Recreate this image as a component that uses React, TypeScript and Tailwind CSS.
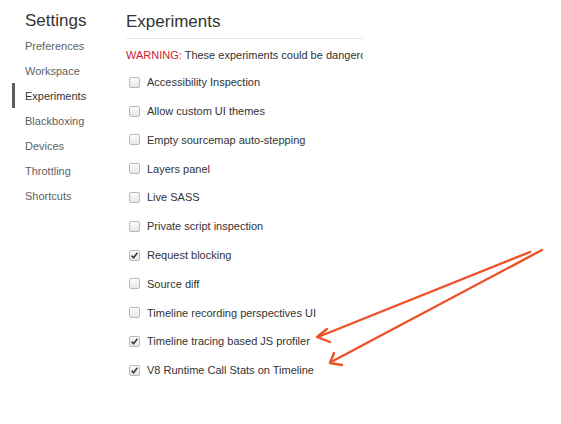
const NAV = ["Preferences", "Workspace", "Experiments", "Blackboxing", "Devices", "Throttling", "Shortcuts"];

const EXPERIMENTS: { label: string; checked: boolean }[] = [
  { label: "Accessibility Inspection", checked: false },
  { label: "Allow custom UI themes", checked: false },
  { label: "Empty sourcemap auto-stepping", checked: false },
  { label: "Layers panel", checked: false },
  { label: "Live SASS", checked: false },
  { label: "Private script inspection", checked: false },
  { label: "Request blocking", checked: true },
  { label: "Source diff", checked: false },
  { label: "Timeline recording perspectives UI", checked: false },
  { label: "Timeline tracing based JS profiler", checked: true },
  { label: "V8 Runtime Call Stats on Timeline", checked: true },
];

function Checkbox({ checked }: { checked: boolean }) {
  return (
    <span className="flex h-[11px] w-[11px] shrink-0 items-center justify-center rounded-[2px] border border-[#b9b9b9] bg-gradient-to-b from-[#fdfdfd] to-[#e6e6e6]">
      {checked && (
        <svg width="9" height="9" viewBox="0 0 9 9">
          <path d="M1.6 4.6 L3.6 6.7 L7.4 1.8" fill="none" stroke="#3a3a3a" strokeWidth="1.6" />
        </svg>
      )}
    </span>
  );
}

export default function App() {
  return (
    <div className="relative h-[424px] w-[561px] overflow-hidden bg-white font-['Liberation_Sans',Arial,sans-serif]">
      <div className="flex">
        {/* sidebar */}
        <div className="w-[126px] shrink-0 pt-[11px]">
          <div className="pl-[25px] text-[17px] leading-[20px] text-[#333]">Settings</div>
          <div className="mt-[3px] flex flex-col">
            {NAV.map((item) => {
              const active = item === "Experiments";
              return (
                <div key={item} className="relative flex h-[25px] items-center pl-[25px]">
                  {active && <span className="absolute left-[12px] top-[-1px] h-[25px] w-[3px] bg-[#5c5c5c]" />}
                  <span className={`text-[11px] ${active ? "text-[#333]" : "text-[#5f5f5f]"}`}>{item}</span>
                </div>
              );
            })}
          </div>
        </div>

        {/* main */}
        <div className="w-[237px] overflow-hidden pt-[12px]">
          <div className="border-b border-[#e6e6e6] pb-[6px] text-[17px] leading-[20px] text-[#333]">Experiments</div>
          <div className="mt-[9px] whitespace-nowrap text-[11px] leading-[14px] text-[#333]">
            <span className="text-[#d0202a]">WARNING:</span> These experiments could be dangerous and may require restart.
          </div>
          <div className="mt-[6px] flex flex-col">
            {EXPERIMENTS.map((e) => (
              <div key={e.label} className="flex h-[28.8px] items-center gap-[7px] pl-[3px]">
                <Checkbox checked={e.checked} />
                <span className="whitespace-nowrap text-[11px] text-[#333]">{e.label}</span>
              </div>
            ))}
          </div>
        </div>
      </div>

      {/* annotation arrows */}
      <svg className="pointer-events-none absolute left-0 top-0" width="561" height="424">
        <g fill="none" stroke="#ee5128" strokeWidth="2.4" strokeLinecap="round" strokeLinejoin="round">
          <path d="M530 252 L318 337" />
          <path d="M327 329 L317 337 L330 342" />
          <path d="M542 250 L331 362" />
          <path d="M334 353 L330 363 L342 365" />
        </g>
      </svg>
    </div>
  );
}
